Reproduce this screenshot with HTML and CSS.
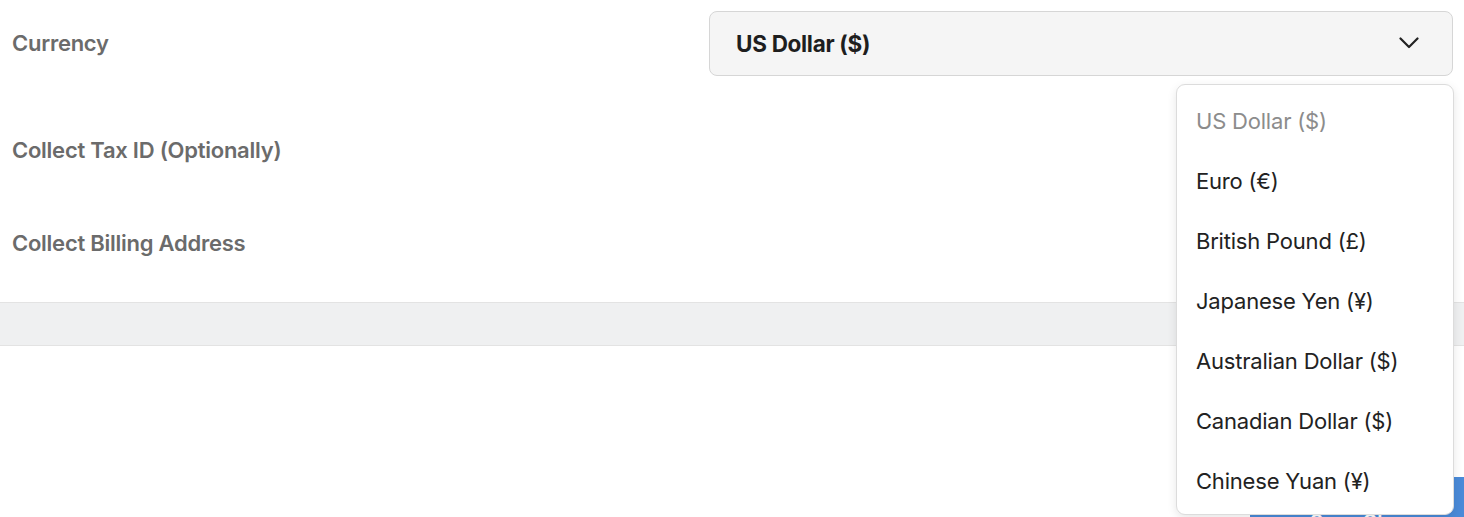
FILE: index.html
```html
<!DOCTYPE html>
<html lang="en">
<head>
<meta charset="utf-8">
<title>Currency settings</title>
<link rel="stylesheet" href="styles.css">
</head>
<body>
<div class="page">
  <div class="form">
    <div class="row row-currency">
      <div class="label">Currency</div>
      <div class="select">
        <span class="select-value">US Dollar ($)</span>
        <svg class="chevron" width="20" height="12" viewBox="0 0 20 12"><polyline points="1.5,1.5 10,10 18.5,1.5" fill="none" stroke="#222" stroke-width="2.2" stroke-linecap="round" stroke-linejoin="round"/></svg>
      </div>
    </div>
    <div class="row row-tax">
      <div class="label">Collect Tax ID (Optionally)</div>
    </div>
    <div class="row row-billing">
      <div class="label">Collect Billing Address</div>
    </div>
  </div>
  <div class="band"></div>
  <div class="footer"></div>

  <div class="action-btn"><span>Save Changes</span></div>

  <ul class="menu">
    <li class="menu-item selected">US Dollar ($)</li>
    <li class="menu-item">Euro (€)</li>
    <li class="menu-item">British Pound (£)</li>
    <li class="menu-item">Japanese Yen (¥)</li>
    <li class="menu-item">Australian Dollar ($)</li>
    <li class="menu-item">Canadian Dollar ($)</li>
    <li class="menu-item">Chinese Yuan (¥)</li>
  </ul>
</div>
</body>
</html>
```
FILE: styles.css
```css
* { box-sizing: border-box; }
html, body {
  margin: 0;
  padding: 0;
  background: #ffffff;
  font-family: Inter, "Noto Sans", "Liberation Sans", sans-serif;
}
.page {
  position: relative;
  width: 1464px;
  height: 517px;
  overflow: hidden;
}
.form {
  padding: 0 11px 0 12px;
}
.row {
  display: flex;
  align-items: center;
  justify-content: space-between;
}
.row-currency { height: 86px; }
.row-tax { height: 128px; }
.row-billing { height: 58px; }
.label {
  font-size: 22px;
  font-weight: 600;
  color: #6b6b6b;
  letter-spacing: -0.25px;
}
.select {
  width: 744px;
  height: 65px;
  background: #f5f5f5;
  border: 1px solid #d6d6d6;
  border-radius: 8px;
  display: flex;
  align-items: center;
  justify-content: space-between;
  padding: 0 33px 0 26px;
}
.select-value {
  font-size: 22.5px;
  font-weight: 700;
  color: #1e1e1e;
  letter-spacing: -0.3px;
}
.chevron { display: block; }
.band {
  margin-top: 30px;
  height: 44px;
  background: #eff0f1;
  border-top: 1px solid #e3e3e3;
  border-bottom: 1px solid #e3e3e3;
}
.action-btn {
  position: absolute;
  left: 1250px;
  top: 477px;
  width: 240px;
  height: 80px;
  background: #4a8ad8;
  border-radius: 9px;
  color: #ffffff;
  font-size: 20px;
  font-weight: 600;
  padding: 33px 0 0 60px;
}
.menu {
  position: absolute;
  top: 84px;
  left: 1176px;
  width: 278px;
  margin: 0;
  padding: 6px 0 3px;
  list-style: none;
  background: #ffffff;
  border: 1px solid #dcdcdc;
  border-radius: 9px;
  box-shadow: 0 3px 10px rgba(0,0,0,0.10);
}
.menu-item {
  height: 60px;
  display: flex;
  align-items: center;
  padding-left: 19px;
  font-size: 22px;
  color: #222222;
  letter-spacing: -0.2px;
}
.menu-item.selected { color: #8c8c8c; }
```
